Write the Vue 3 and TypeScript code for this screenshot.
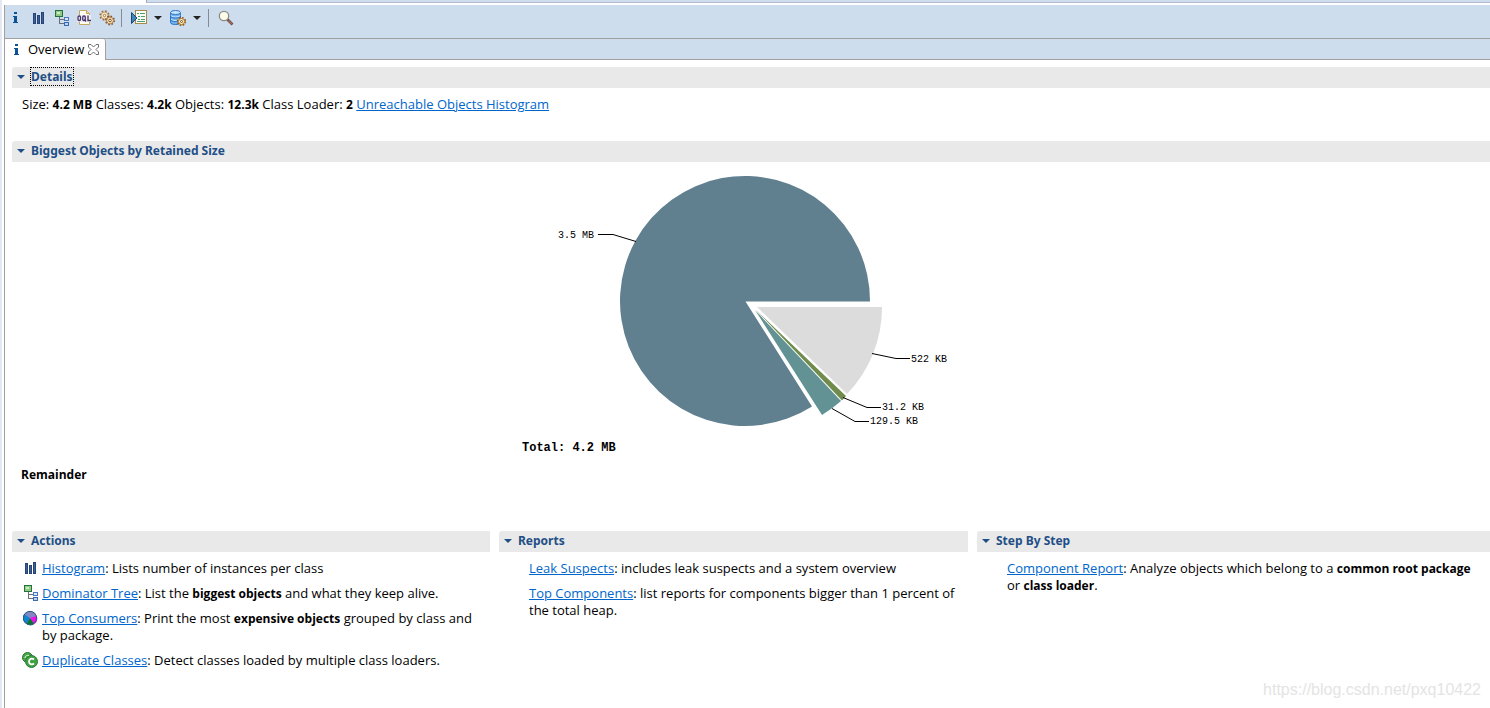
<script setup lang="ts">
import { ref } from 'vue'

type IconName = 'info' | 'bars' | 'tree' | 'oql' | 'gears' | 'run' | 'db' | 'search' | 'pie' | 'classes'

interface Tool {
  icon?: IconName
  label?: string
  menu?: boolean
}

interface Part {
  text: string
  bold?: boolean
}

interface Entry {
  icon?: IconName
  link: string
  parts: Part[]
}

interface Panel {
  title: string
  entries: Entry[]
}

const tools: Tool[] = [
  { icon: 'info', label: 'Overview' },
  { icon: 'bars', label: 'Histogram' },
  { icon: 'tree', label: 'Dominator Tree' },
  { icon: 'oql', label: 'OQL' },
  { icon: 'gears', label: 'Calculate' },
  {},
  { icon: 'run', label: 'Reports', menu: true },
  { icon: 'db', label: 'Queries', menu: true },
  {},
  { icon: 'search', label: 'Find' },
]

const stats = [
  { name: 'Size', value: '4.2 MB' },
  { name: 'Classes', value: '4.2k' },
  { name: 'Objects', value: '12.3k' },
  { name: 'Class Loader', value: '2' },
]

const panels: Panel[] = [
  {
    title: 'Actions',
    entries: [
      { icon: 'bars', link: 'Histogram', parts: [{ text: ': Lists number of instances per class' }] },
      {
        icon: 'tree',
        link: 'Dominator Tree',
        parts: [{ text: ': List the ' }, { text: 'biggest objects', bold: true }, { text: ' and what they keep alive.' }],
      },
      {
        icon: 'pie',
        link: 'Top Consumers',
        parts: [{ text: ': Print the most ' }, { text: 'expensive objects', bold: true }, { text: ' grouped by class and by package.' }],
      },
      { icon: 'classes', link: 'Duplicate Classes', parts: [{ text: ': Detect classes loaded by multiple class loaders.' }] },
    ],
  },
  {
    title: 'Reports',
    entries: [
      { link: 'Leak Suspects', parts: [{ text: ': includes leak suspects and a system overview' }] },
      { link: 'Top Components', parts: [{ text: ': list reports for components bigger than 1 percent of the total heap.' }] },
    ],
  },
  {
    title: 'Step By Step',
    entries: [
      {
        link: 'Component Report',
        parts: [
          { text: ': Analyze objects which belong to a ' },
          { text: 'common root package', bold: true },
          { text: ' or ' },
          { text: 'class loader', bold: true },
          { text: '.' },
        ],
      },
    ],
  },
]

const closed = ref<Record<string, boolean>>({})
const toggle = (title: string) => {
  closed.value[title] = !closed.value[title]
}
</script>

<template>
  <svg class="defs" width="0" height="0" aria-hidden="true">
    <symbol id="info" viewBox="0 0 16 16">
      <path fill="#0b5394" d="M7 2h3v2H7zM6 6h4v6h1v1H6v-1h1V7H6z" />
    </symbol>
    <symbol id="bars" viewBox="0 0 16 16" shape-rendering="crispEdges">
      <path fill="#264478" d="M3 3h3v11H3zM7 5h3v9H7zM11 2h3v12h-3z" />
      <path fill="#3c6090" d="M4 4h1v9H4zM8 6h1v7H8zM12 3h1v10h-1z" />
    </symbol>
    <symbol id="tree" viewBox="0 0 16 16" shape-rendering="crispEdges">
      <path fill="none" stroke="#6b7078" d="M6.500 7v6.500H11M6.500 9.500H11" />
      <rect x="2.500" y=".5" width="7" height="6" fill="#8fcb84" stroke="#24733e" />
      <path fill="#cdebc5" d="M4 2h3v2H4z" />
      <rect x="11.500" y="7.500" width="4" height="3" fill="#d8e8fa" stroke="#4b78bc" />
      <rect x="11.500" y="12.500" width="4" height="3" fill="#b9d2f0" stroke="#3c69b2" />
    </symbol>
    <symbol id="oql" viewBox="0 0 16 16">
      <path fill="#fffdf0" stroke="#c4a765" d="M3.500.5h7l3 3v11h-10z" />
      <path fill="#efd48b" stroke="#c4a765" d="M10.500.5v3h3" />
      <rect x="1" y="5" width="14" height="7" fill="#f0eef0" />
      <g fill="none" stroke="#44346b" stroke-width="1.300">
        <rect x="2" y="6" width="2.500" height="4.500" rx="1" />
        <rect x="6.750" y="6" width="2.500" height="4.500" rx="1" />
        <path d="M8.500 9.500l1.500 2M12 5.500v5h3" />
      </g>
    </symbol>
    <symbol id="gears" viewBox="0 0 16 16">
      <circle cx="5.500" cy="5.500" r="4.200" fill="none" stroke="#9a6a3c" stroke-width="2" stroke-dasharray="1.600 1.700" />
      <circle cx="5.500" cy="5.500" r="3.500" fill="#f5e6c4" stroke="#b98a55" stroke-width=".8" />
      <circle cx="5.500" cy="5.500" r="1.200" fill="#fff" stroke="#8e5f36" stroke-width=".8" />
      <circle cx="11" cy="10.500" r="4" fill="none" stroke="#80502b" stroke-width="2" stroke-dasharray="1.500 1.640" />
      <circle cx="11" cy="10.500" r="3.400" fill="#f6e1b1" stroke="#a06c38" stroke-width=".8" />
      <circle cx="11" cy="10.500" r="1.300" fill="#fff" stroke="#80502b" />
    </symbol>
    <symbol id="run" viewBox="0 0 16 16">
      <rect x="4.500" y=".5" width="11" height="13" fill="#fbfdf4" stroke="#a78a48" />
      <path stroke="#4aa06c" d="M6 3.500h2m1 0h5M7 6.500h2m1 0h4M7 9.500h2m1 0h4M6 11.500h8" />
      <path fill="#3f86b4" stroke="#174a78" d="M.5 2.500v11L6 8z" />
    </symbol>
    <symbol id="db" viewBox="0 0 16 16">
      <path fill="#6fb1ee" stroke="#2a72c3" d="M.5 2.500v10c0 2.700 10 2.700 10 0v-10" />
      <ellipse cx="5.500" cy="2.500" rx="5" ry="2" fill="#cbe7fd" stroke="#2a72c3" />
      <path fill="none" stroke="#d9efff" d="M1 5.500c1 2 8 2 9 0M1 9c1 2 7 2 9 0" />
      <path fill="none" stroke="#2a72c3" d="M.5 6.500c1 2 9 2 10 0M.5 10c1 2 8 2 10 0" />
      <circle cx="11.500" cy="11.500" r="3.700" fill="none" stroke="#8a5524" stroke-width="1.800" stroke-dasharray="1.600 1.306" />
      <circle cx="11.500" cy="11.500" r="3" fill="#fff1c4" stroke="#b5771c" />
      <circle cx="11.500" cy="11.500" r="1" fill="#fff" stroke="#7a4a20" />
    </symbol>
    <symbol id="search" viewBox="0 0 16 16">
      <path stroke="#5d4a4a" stroke-width="2.600" d="M9.500 9.500l5 5" />
      <path stroke="#b96a4b" stroke-width="1.200" d="M10.500 10.500l3.500 3.500" />
      <circle cx="6" cy="6" r="4.700" fill="#fbfbe9" stroke="#8c8b80" stroke-width="1.300" />
    </symbol>
    <symbol id="pie" viewBox="0 0 16 16">
      <circle cx="8" cy="8" r="7" fill="#8585c6" />
      <path fill="#0c86d0" d="M8 8L2 4.300A7 7 0 0 0 4.500 14z" />
      <path fill="#087332" d="M8 8l-3.500 6a7 7 0 0 0 8 0z" />
      <path fill="#f011e8" d="M8 8l4.500 6A7 7 0 0 0 14.800 6z" />
      <circle cx="8" cy="8" r="6.600" fill="none" stroke="#285d7c" />
    </symbol>
    <symbol id="classes" viewBox="0 0 16 16">
      <circle cx="5.500" cy="5.500" r="5" fill="#4aa744" stroke="#24733b" />
      <path fill="none" stroke="#e9f6e5" d="M3 6c0-2 2-3 4-2.500" />
      <circle cx="9.500" cy="9.500" r="6" fill="#3fa141" stroke="#2b7b3f" />
      <path fill="none" stroke="#fff" stroke-width="1.800" d="M12 7.500c-2-1.700-5-.7-5 2s3 3.700 5 2" />
    </symbol>
  </svg>

  <div class="window">
    <div class="upper"></div>
    <main class="editor">
      <div class="toolbar" role="toolbar">
        <template v-for="(tool, i) in tools" :key="i">
          <span v-if="!tool.icon" class="separator"></span>
          <template v-else>
            <button class="tool" type="button" :aria-label="tool.label">
              <svg class="icon"><use :href="'#' + tool.icon" /></svg>
            </button>
            <button v-if="tool.menu" class="drop" type="button" :aria-label="tool.label + ' menu'">
              <svg width="8" height="4"><path fill="#222" d="M0 0h8L4 4z" /></svg>
            </button>
          </template>
        </template>
      </div>

      <div class="tabs" role="tablist">
        <div class="tab">
          <button class="tab-name" type="button" role="tab" aria-selected="true">
            <svg class="icon"><use href="#info" /></svg>
            <span>Overview</span>
          </button>
          <button class="close" type="button" aria-label="Close">
            <svg width="11" height="11" viewBox="0 0 11 11">
              <path fill="#fff" stroke="#6e6e6e" d="M.5.5h2.500l2.500 2.500L8 .5h2.500V3L8 5.500 10.500 8v2.500H8L5.500 8 3 10.500H.5V8L3 5.500.5 3z" />
            </svg>
          </button>
        </div>
      </div>

      <div class="page">
        <section class="details">
          <h2 class="bar">
            <button class="twist" type="button" @click="toggle('Details')">
              <svg width="8" height="4"><path fill="#1f4f87" d="M0 0h8L4 4z" /></svg>
              <span class="focused">Details</span>
            </button>
          </h2>
          <p v-show="!closed['Details']" class="stats">
            <template v-for="s in stats" :key="s.name">{{ s.name }}: <b>{{ s.value }}</b>{{ ' ' }}</template>
            <a href="#">Unreachable Objects Histogram</a>
          </p>
        </section>

        <section class="biggest">
          <h2 class="bar">
            <button class="twist" type="button" @click="toggle('Biggest')">
              <svg width="8" height="4"><path fill="#1f4f87" d="M0 0h8L4 4z" /></svg>
              <span>Biggest Objects by Retained Size</span>
            </button>
          </h2>
          <div v-show="!closed['Biggest']">
            <div class="chart">
              <svg width="450" height="300" viewBox="520 162 450 300" role="img" aria-label="Biggest objects by retained size">
                <path fill="#61808f" d="M745.500 301.500L870 301.500A125 125 0 1 0 812 406.500Z" />
                <path fill="#dcdcdc" d="M757 307L882 307A125 125 0 0 1 847 394Z" />
                <path fill="#6f8c4c" d="M756 310L846 396L842 400.500Z" />
                <path fill="#629294" d="M755 310L841 401A125 125 0 0 1 822 415Z" />
                <g class="leader">
                  <path d="M598 234.500H613L636 241.500" />
                  <path d="M872 353.500L896 358.500H910" />
                  <path d="M843 397.500L867 407.500H881" />
                  <path d="M832 408.500L855 421.500H869" />
                </g>
                <g class="label">
                  <text x="558" y="238">3.5 MB</text>
                  <text x="911" y="362">522 KB</text>
                  <text x="882" y="410">31.2 KB</text>
                  <text x="870" y="424">129.5 KB</text>
                </g>
                <text class="total" x="522" y="451">Total: 4.2 MB</text>
              </svg>
            </div>
            <p class="remainder">Remainder</p>
          </div>
        </section>

        <div class="columns">
          <section v-for="panel in panels" :key="panel.title">
            <h2 class="bar">
              <button class="twist" type="button" @click="toggle(panel.title)">
                <svg width="8" height="4"><path fill="#1f4f87" d="M0 0h8L4 4z" /></svg>
                <span>{{ panel.title }}</span>
              </button>
            </h2>
            <ul v-show="!closed[panel.title]">
              <li v-for="e in panel.entries" :key="e.link">
                <svg v-if="e.icon" class="icon"><use :href="'#' + e.icon" /></svg>
                <p><a href="#">{{ e.link }}</a><template v-for="(p, i) in e.parts" :key="i"><b v-if="p.bold">{{ p.text }}</b><template v-else>{{ p.text }}</template></template></p>
              </li>
            </ul>
          </section>
        </div>
      </div>
    </main>
    <span class="watermark">https://blog.csdn.net/pxq10422</span>
  </div>
</template>

<style>
body {
  margin: 0;
  background: #fff;
}
</style>

<style scoped>
.defs {
  position: absolute;
}
.window {
  position: relative;
  min-height: 100vh;
  box-sizing: border-box;
  padding-left: 4px;
  background: linear-gradient(to right, #e4e8f5 2px, #fff 2px);
  color: #000;
  font: 13px/17px "Open Sans", "Noto Sans", sans-serif;
}
.upper {
  height: 3px;
  margin: 0 0 2px 142px;
  box-sizing: border-box;
  background: #cdddee;
  border-left: 1px solid #a0a8b4;
  border-bottom: 1px solid #b4bccb;
}
.editor {
  min-height: calc(100vh - 5px);
  box-sizing: border-box;
  border-left: 1px solid #a0a0a0;
  background: #fff;
}
button {
  padding: 0;
  border: 0;
  background: none;
  color: inherit;
  font: inherit;
}
svg {
  display: block;
  flex: none;
}
.icon {
  width: 16px;
  height: 16px;
}
.toolbar {
  display: flex;
  align-items: center;
  gap: 7px;
  height: 33px;
  padding: 0 2px 7px;
  box-sizing: border-box;
  background: #cdddee;
}
.separator {
  width: 1px;
  height: 18px;
  margin: 0 2px 0 -1px;
  background: #838b94;
}
.drop {
  width: 9px;
}
.tabs {
  display: flex;
  height: 22px;
  box-sizing: border-box;
  background: #cdddee;
  border-top: 1px solid #a0a0a0;
  border-bottom: 1px solid #a0a0a0;
}
.tab {
  display: flex;
  align-items: center;
  gap: 4px;
  height: 21px;
  padding: 0 6px 0 3px;
  background: #fff;
  border-right: 1px solid #a0a0a0;
  border-top-right-radius: 3px;
}
.tab-name {
  display: flex;
  align-items: center;
  gap: 4px;
}
.page {
  padding: 7px 0 0 7px;
}
h2,
p,
ul {
  margin: 0;
  padding: 0;
}
.bar {
  height: 21px;
  background: #e9e9e9;
  border-top-left-radius: 3px;
  font: bold 12px/17px "Noto Sans", sans-serif;
}
.twist {
  display: flex;
  align-items: center;
  gap: 6px;
  height: 19px;
  padding-left: 5px;
  color: #1f4f87;
}
.focused {
  outline: 1px dotted #000;
}
a {
  color: #0066cc;
}
.stats {
  padding: 8px 10px;
}
.details {
  min-height: 74px;
}
.biggest {
  min-height: 390px;
}
.chart {
  display: flex;
  justify-content: center;
  padding-right: 12px;
}
.leader {
  fill: none;
  stroke: #000;
}
.label {
  font: 10px "Liberation Mono", monospace;
}
.total {
  font: bold 12px "Liberation Mono", monospace;
}
.remainder {
  padding: 4px 9px;
  font-weight: bold;
  font-size: 12px;
}
.columns {
  display: grid;
  grid-template-columns: 478fr 469fr 513fr;
  gap: 9px;
}
ul {
  display: flex;
  flex-direction: column;
  gap: 8px;
  padding: 8px 10px;
  list-style: none;
}
li {
  display: flex;
  gap: 4px;
}
li p {
  padding-left: 20px;
}
.icon + p {
  padding-left: 0;
}
b {
  font-size: 12px;
}
.watermark {
  position: absolute;
  right: 9px;
  bottom: 9px;
  color: #e4e4e4;
  font: 16px/18px "Liberation Sans", sans-serif;
}
</style>
